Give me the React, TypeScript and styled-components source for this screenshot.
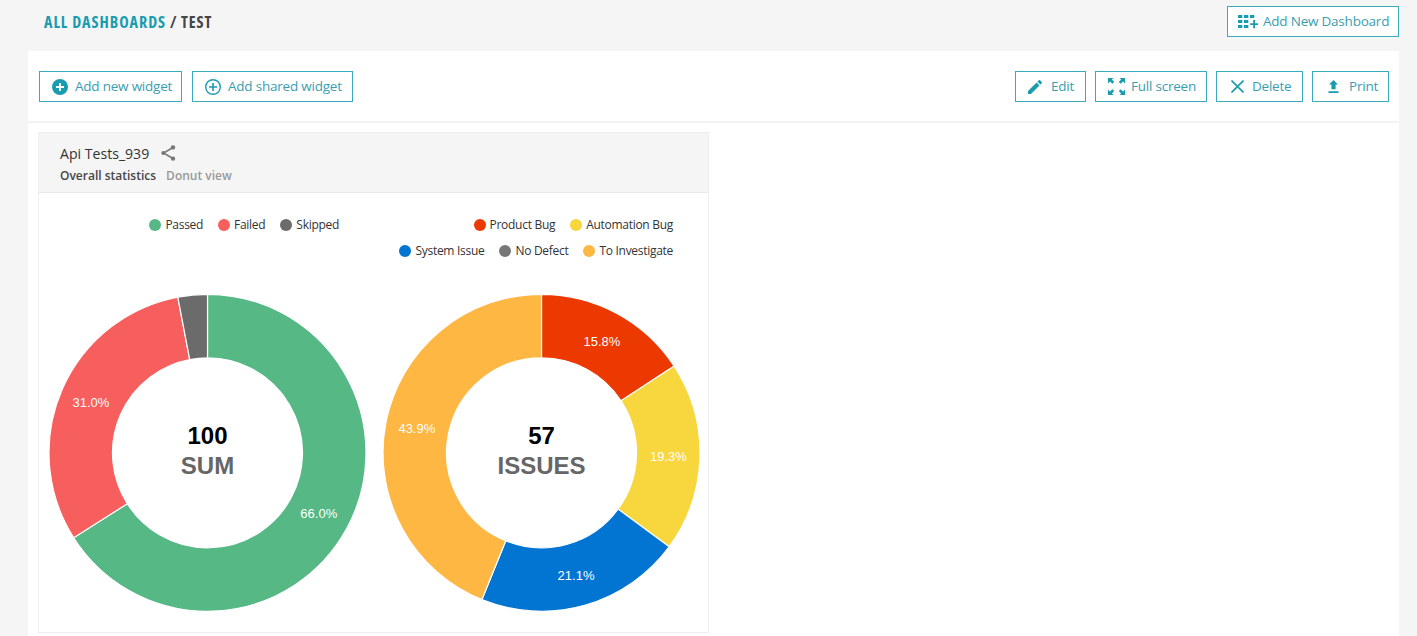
import React from 'react';
import styled, { createGlobalStyle } from 'styled-components';

const teal = '#1a9cb0';

const GlobalStyle = createGlobalStyle`
  * { box-sizing: border-box; }
  body { margin: 0; background: #f5f5f5; font-family: "Open Sans", "Noto Sans", sans-serif; overflow: hidden; }
`;

const Page = styled.div`
  width: 1417px;
  height: 636px;
  display: flex;
  flex-direction: column;
  padding: 0 18px 0 28px;
  overflow: hidden;
`;

const Header = styled.header`
  display: flex;
  flex: none;
  justify-content: space-between;
  align-items: flex-start;
  height: 51px;
  padding: 6px 0 0 16px;
`;

const Breadcrumbs = styled.h1`
  margin: 6px 0 0;
  font-size: 16px;
  line-height: 20px;
  font-weight: 700;
  font-stretch: 75%;
  letter-spacing: 0.9px;
  color: #464547;
  white-space: nowrap;
`;

const Crumb = styled.span`
  color: ${teal};
  letter-spacing: 0.98px;
`;

const Button = styled.button<{ $width: number; $pad: number; $gap: number }>`
  display: flex;
  align-items: center;
  flex: none;
  width: ${(p) => p.$width}px;
  height: 31px;
  padding: 0 0 0 ${(p) => p.$pad}px;
  gap: ${(p) => p.$gap}px;
  border: 1px solid #3aabbc;
  background: #fff;
  color: #3a9eb0;
  font: 400 13.5px/20px "Open Sans", "Noto Sans", sans-serif;
  letter-spacing: -0.22px;
  white-space: nowrap;
  svg { flex: none; color: ${teal}; }
`;

const ButtonText = styled.span`
  padding-bottom: 2px;
`;

const Content = styled.main`
  flex: 1;
  background: #fff;
`;

const Toolbar = styled.div`
  display: flex;
  justify-content: space-between;
  height: 72px;
  padding: 20px 10px 0 11px;
  border-bottom: 2px solid #f2f2f2;
`;

const ButtonGroup = styled.div<{ $gap: number }>`
  display: flex;
  gap: ${(p) => p.$gap}px;
`;

const Widget = styled.section`
  width: 671px;
  height: 501px;
  margin: 9px 0 0 10px;
  border: 1px solid #efefef;
`;

const WidgetHeader = styled.div`
  height: 60px;
  padding: 10px 0 0 21px;
  background: #f5f5f5;
  border-bottom: 1px solid #e9e9e9;
`;

const WidgetTitle = styled.div`
  display: flex;
  align-items: center;
  gap: 12px;
  height: 20px;
  font-size: 14.1px;
  font-weight: 500;
  color: #333;
  svg { flex: none; }
`;

const WidgetMeta = styled.div`
  display: flex;
  gap: 10px;
  margin-top: 4px;
  font-size: 12px;
  line-height: 17px;
  font-weight: 600;
  color: #464547;
`;

const ViewName = styled.span`
  color: #999;
`;

const Charts = styled.div`
  display: flex;
`;

const ChartPanel = styled.div`
  width: 334px;
`;

const Legend = styled.div`
  height: 91px;
  padding: 19px 34px 0 0;
  display: flex;
  flex-direction: column;
`;

const LegendRow = styled.div`
  display: flex;
  justify-content: flex-end;
  gap: 15px;
  height: 26px;
`;

const LegendItem = styled.span<{ $color: string }>`
  display: flex;
  align-items: center;
  gap: 4px;
  color: #333;
  font-size: 12px;
  line-height: 24px;
  height: 25px;
  letter-spacing: -0.29px;
  white-space: nowrap;
  &::before {
    content: '';
    width: 12px;
    height: 12px;
    border-radius: 50%;
    background: ${(p) => p.$color};
  }
`;

const DonutSvg = styled.svg`
  display: block;
  font-family: "Liberation Sans", Arial, sans-serif;
`;

type Slice = { value: number; color: string; label?: string };
type LegendEntry = [string, string];

const CX = 168.5;
const CY = 168.8;
const OUTER = 158.5;
const INNER = 95;

const point = (angle: number, r: number) => [CX + r * Math.sin(angle), CY - r * Math.cos(angle)];

function arc(a: number, b: number) {
  const large = b - a > Math.PI ? 1 : 0;
  const [x1, y1] = point(a, OUTER);
  const [x2, y2] = point(b, OUTER);
  const [x3, y3] = point(b, INNER);
  const [x4, y4] = point(a, INNER);
  return `M${x1} ${y1}A${OUTER} ${OUTER} 0 ${large} 1 ${x2} ${y2}L${x3} ${y3}A${INNER} ${INNER} 0 ${large} 0 ${x4} ${y4}Z`;
}

function Donut({ slices, total, caption }: { slices: Slice[]; total: number; caption: string }) {
  let sum = 0;
  return (
    <DonutSvg width="334" height="340" overflow="visible">
      {slices.map((s) => {
        const a = (sum / total) * 2 * Math.PI;
        sum += s.value;
        const b = (sum / total) * 2 * Math.PI;
        const [lx, ly] = point((a + b) / 2, 127);
        return (
          <g key={s.color}>
            <path d={arc(a, b)} fill={s.color} stroke="#fff" strokeWidth="1.2" />
            {s.label && (
              <text x={lx} y={ly + 4.5} fill="#fff" fontSize="13" textAnchor="middle">{s.label}</text>
            )}
          </g>
        );
      })}
      <text x={CX} y="160" fontSize="24" fontWeight="700" textAnchor="middle">{total}</text>
      <text x={CX} y="190" fontSize="24" fontWeight="700" fill="#666" textAnchor="middle">{caption}</text>
    </DonutSvg>
  );
}

function Chart({ legend, ...donut }: { legend: LegendEntry[][]; slices: Slice[]; total: number; caption: string }) {
  return (
    <ChartPanel>
      <Legend>
        {legend.map((row, i) => (
          <LegendRow key={i}>
            {row.map(([name, color]) => <LegendItem key={name} $color={color}>{name}</LegendItem>)}
          </LegendRow>
        ))}
      </Legend>
      <Donut {...donut} />
    </ChartPanel>
  );
}

const GridPlusIcon = () => (
  <svg width="20" height="15" viewBox="0 0 20 15" fill="currentColor">
    <path d="M0 1h4.300v3H0zM6 1h4.300v3H6zM12 1h4.300v3H12zM0 6h4.300v3H0zM6 6h4.300v3H6zM0 11h4.300v3H0zM6 11h4.300v3H6z" />
    <path d="M15.200 6h1.800v3.200h3v1.800h-3v3.200h-1.800v-3.200h-3V9.200h3z" />
  </svg>
);
const PlusFilledIcon = () => (
  <svg width="16" height="16" viewBox="0 0 16 16">
    <circle cx="8" cy="8" r="8" fill="currentColor" />
    <path d="M8 4v8M4 8h8" stroke="#fff" strokeWidth="1.8" />
  </svg>
);
const PlusOutlineIcon = () => (
  <svg width="16" height="16" viewBox="0 0 16 16" fill="none" stroke="currentColor">
    <circle cx="8" cy="8" r="7.3" strokeWidth="1.4" />
    <path d="M8 4v8M4 8h8" strokeWidth="1.6" />
  </svg>
);
const PencilIcon = () => (
  <svg width="14" height="14" viewBox="3 3 18 18" fill="currentColor">
    <path d="M3 17.25V21h3.75L17.81 9.94l-3.75-3.75L3 17.25zM20.71 7.04a1 1 0 0 0 0-1.41l-2.34-2.34a1 1 0 0 0-1.41 0l-1.83 1.83 3.75 3.75 1.83-1.83z" />
  </svg>
);
const ExpandIcon = () => (
  <svg width="17" height="17" viewBox="0 0 17 17" fill="currentColor">
    <path id="corner" d="M0 0h5.500L3.900 1.600 6.200 3.900 4.300 5.800 2 3.500 0 5.500z" />
    <use href="#corner" transform="matrix(-1 0 0 1 17 0)" />
    <use href="#corner" transform="matrix(1 0 0 -1 0 17)" />
    <use href="#corner" transform="matrix(-1 0 0 -1 17 17)" />
  </svg>
);
const CrossIcon = () => (
  <svg width="13" height="13" viewBox="0 0 13 13" stroke="currentColor" strokeWidth="1.6">
    <path d="M.5.5l12 12M12.500.5l-12 12" />
  </svg>
);
const UploadIcon = () => (
  <svg width="11" height="13" viewBox="0 0 11 13" fill="currentColor">
    <path d="M5.500 0L10 4.600H7.600v4.600h-4.200V4.600H1zM.5 11.300h10v1.700H.5z" />
  </svg>
);
const ShareIcon = () => (
  <svg width="15" height="16" viewBox="0 0 15 16" fill="#777">
    <path d="M12 2.500L2.500 8l9.500 5.500" fill="none" stroke="#777" strokeWidth="1.5" />
    <circle cx="12" cy="2.400" r="2.200" />
    <circle cx="2.300" cy="8" r="2" />
    <circle cx="12" cy="13.600" r="2.200" />
  </svg>
);

export default function App() {
  return (
    <>
      <GlobalStyle />
      <Page>
        <Header>
          <Breadcrumbs><Crumb>ALL DASHBOARDS</Crumb> / TEST</Breadcrumbs>
          <Button $width={172} $pad={10} $gap={5}><GridPlusIcon /><ButtonText>Add New Dashboard</ButtonText></Button>
        </Header>
        <Content>
          <Toolbar>
            <ButtonGroup $gap={10}>
              <Button $width={143} $pad={12} $gap={7}><PlusFilledIcon /><ButtonText>Add new widget</ButtonText></Button>
              <Button $width={161} $pad={12} $gap={7}><PlusOutlineIcon /><ButtonText>Add shared widget</ButtonText></Button>
            </ButtonGroup>
            <ButtonGroup $gap={9}>
              <Button $width={71} $pad={12} $gap={9}><PencilIcon /><ButtonText>Edit</ButtonText></Button>
              <Button $width={112} $pad={12} $gap={6}><ExpandIcon /><ButtonText>Full screen</ButtonText></Button>
              <Button $width={87} $pad={14} $gap={8}><CrossIcon /><ButtonText>Delete</ButtonText></Button>
              <Button $width={77} $pad={15} $gap={10}><UploadIcon /><ButtonText>Print</ButtonText></Button>
            </ButtonGroup>
          </Toolbar>
          <Widget>
            <WidgetHeader>
              <WidgetTitle>Api Tests_939<ShareIcon /></WidgetTitle>
              <WidgetMeta><span>Overall statistics</span><ViewName>Donut view</ViewName></WidgetMeta>
            </WidgetHeader>
            <Charts>
              <Chart
                legend={[[['Passed', '#56b884'], ['Failed', '#f75e5e'], ['Skipped', '#6b6b6b']]]}
                total={100}
                caption="SUM"
                slices={[
                  { value: 66, color: '#56b884', label: '66.0%' },
                  { value: 31, color: '#f75e5e', label: '31.0%' },
                  { value: 3, color: '#6b6b6b' },
                ]}
              />
              <Chart
                legend={[
                  [['Product Bug', '#ec3900'], ['Automation Bug', '#f7d63e']],
                  [['System Issue', '#0274d1'], ['No Defect', '#777777'], ['To Investigate', '#ffb743']],
                ]}
                total={57}
                caption="ISSUES"
                slices={[
                  { value: 9, color: '#ec3900', label: '15.8%' },
                  { value: 11, color: '#f7d63e', label: '19.3%' },
                  { value: 12, color: '#0274d1', label: '21.1%' },
                  { value: 25, color: '#ffb743', label: '43.9%' },
                ]}
              />
            </Charts>
          </Widget>
        </Content>
      </Page>
    </>
  );
}
